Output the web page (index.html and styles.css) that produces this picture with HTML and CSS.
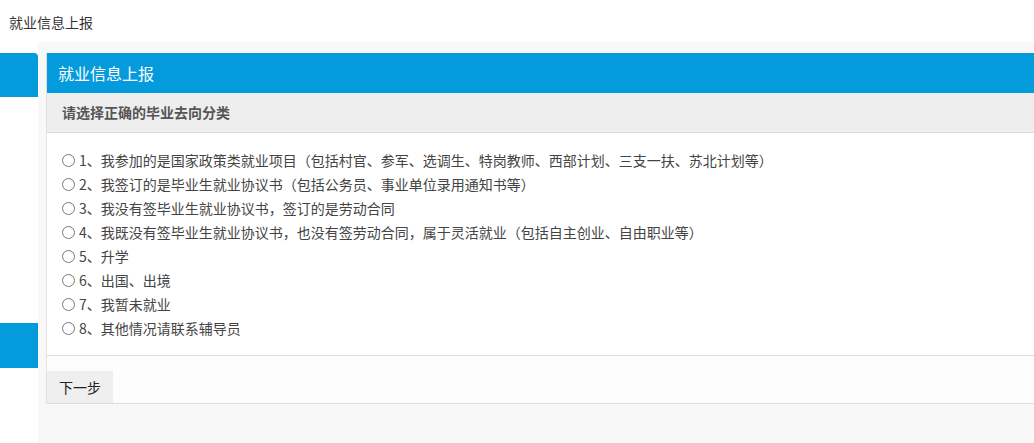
FILE: index.html
```html
<!DOCTYPE html>
<html lang="zh-CN">
<head>
  <meta charset="UTF-8" />
  <title>就业信息上报</title>
  <link rel="stylesheet" href="styles.css">
</head>
<body>
  <div id="topbar">就业信息上报</div>

  <div id="layout">
    <div id="sidebar">
      <div class="side-tab first"></div>
      <div class="side-tab second"></div>
    </div>

    <div id="main">
      <div class="panel">
        <div class="panel-title">就业信息上报</div>
        <div class="panel-sub">请选择正确的毕业去向分类</div>
        <div class="panel-body">
          <label class="option"><input type="radio" name="qx" value="1">1、我参加的是国家政策类就业项目（包括村官、参军、选调生、特岗教师、西部计划、三支一扶、苏北计划等）</label>
          <label class="option"><input type="radio" name="qx" value="2">2、我签订的是毕业生就业协议书（包括公务员、事业单位录用通知书等）</label>
          <label class="option"><input type="radio" name="qx" value="3">3、我没有签毕业生就业协议书，签订的是劳动合同</label>
          <label class="option"><input type="radio" name="qx" value="4">4、我既没有签毕业生就业协议书，也没有签劳动合同，属于灵活就业（包括自主创业、自由职业等）</label>
          <label class="option"><input type="radio" name="qx" value="5">5、升学</label>
          <label class="option"><input type="radio" name="qx" value="6">6、出国、出境</label>
          <label class="option"><input type="radio" name="qx" value="7">7、我暂未就业</label>
          <label class="option"><input type="radio" name="qx" value="8">8、其他情况请联系辅导员</label>
        </div>
        <div class="panel-foot">
          <button id="nextBtn" class="next-btn">下一步</button>
        </div>
      </div>
    </div>
  </div>
</body>
</html>
```

FILE: styles.css
```css
body {
  margin: 0;
  font-family: "Noto Sans CJK SC", "Liberation Sans", sans-serif;
  font-size: 14px;
  color: #333;
  background-color: #fff;
  overflow: hidden;
}

#topbar {
  height: 42px;
  line-height: 44px;
  padding-left: 9px;
  background-color: #fff;
  color: #333;
}

#layout {
  display: flex;
  min-height: 401px;
}

#sidebar {
  width: 38px;
  flex-shrink: 0;
  background-color: #fff;
  display: flex;
  flex-direction: column;
}

.side-tab {
  background-color: #049bdc;
  height: 44px;
}

.side-tab.first {
  margin-top: 11px;
  border-top-right-radius: 4px;
}

.side-tab.second {
  margin-top: 226px;
  height: 45px;
}

#main {
  flex: 1;
  background-color: #f8f8f8;
  padding: 11px 0 0 8px;
}

.panel {
  margin-right: -20px;
  border-left: 1px solid #e2e2e2;
  background-color: #fff;
}

.panel-title {
  height: 40px;
  line-height: 40px;
  padding-left: 11px;
  background-color: #049bdc;
  color: #fff;
  font-size: 16px;
}

.panel-sub {
  height: 39px;
  line-height: 39px;
  padding-left: 15px;
  background-color: #eee;
  border-bottom: 1px solid #ddd;
  color: #555;
  font-weight: bold;
}

.panel-body {
  padding: 15px 0 15px 15px;
  border-bottom: 1px solid #ddd;
  display: flex;
  flex-direction: column;
}

.option {
  display: flex;
  align-items: center;
  height: 24px;
  color: #444;
}

.option input {
  appearance: none;
  flex-shrink: 0;
  box-sizing: content-box;
  width: 11px;
  height: 11px;
  margin: 0 4px 0 0;
  border: 1px solid #777;
  border-radius: 50%;
  background: #fff;
}

.panel-foot {
  padding-top: 15px;
  background-color: #fdfdfd;
  border-bottom: 1px solid #ddd;
  display: flex;
}

.next-btn {
  width: 66px;
  height: 32px;
  border: none;
  background-color: #efefef;
  color: #222;
  font-family: inherit;
  font-size: 14px;
  cursor: pointer;
}
```
